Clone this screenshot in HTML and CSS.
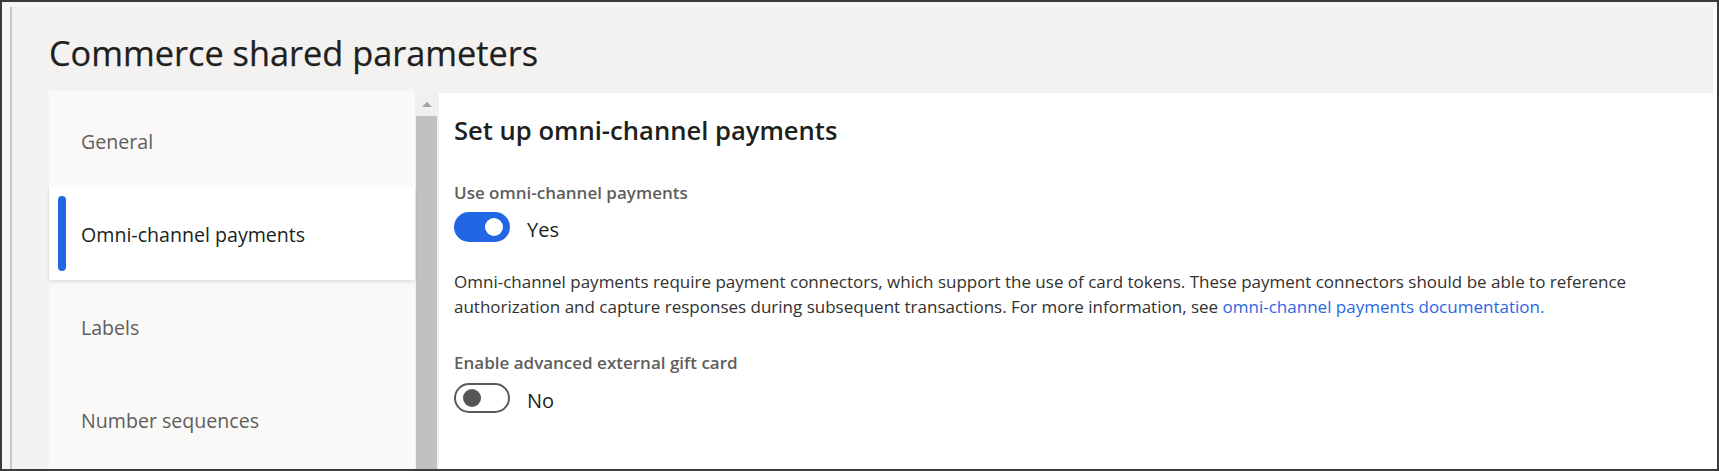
FILE: index.html
```html
<!DOCTYPE html>
<html lang="en">
<head>
<meta charset="utf-8">
<title>Commerce shared parameters</title>
<link rel="stylesheet" href="styles.css">
</head>
<body>
<div class="frame">
  <div class="app">
    <header class="page-header">
      <h1 class="page-title">Commerce shared parameters</h1>
    </header>
    <div class="workspace">
      <nav class="nav">
        <div class="nav-item">General</div>
        <div class="nav-item is-selected"><span class="nav-marker"></span>Omni-channel payments</div>
        <div class="nav-item">Labels</div>
        <div class="nav-item">Number sequences</div>
      </nav>
      <div class="scrollbar">
        <div class="scroll-arrow"><span class="arrow-up"></span></div>
        <div class="scroll-thumb"></div>
      </div>
      <main class="content">
        <h2 class="section-title">Set up omni-channel payments</h2>
        <div class="field-label first">Use omni-channel payments</div>
        <div class="toggle-row">
          <span class="toggle on"><span class="knob"></span></span>
          <span class="toggle-text">Yes</span>
        </div>
        <p class="help">Omni-channel payments require payment connectors, which support the use of card tokens. These payment connectors should be able to reference authorization and capture responses during subsequent transactions. For more information, see <a class="link" href="#">omni-channel payments documentation.</a></p>
        <div class="field-label second">Enable advanced external gift card</div>
        <div class="toggle-row second">
          <span class="toggle off"><span class="knob"></span></span>
          <span class="toggle-text">No</span>
        </div>
      </main>
    </div>
  </div>
</div>
</body>
</html>
```
FILE: styles.css
```css
* { box-sizing: border-box; }
html, body { margin: 0; padding: 0; }
body {
  font-family: "Segoe UI", "Open Sans", "Noto Sans", sans-serif;
  background: #ffffff;
  width: 1719px;
  height: 471px;
  overflow: hidden;
}
.frame {
  width: 1719px;
  height: 471px;
  border: 2px solid #3c3c3c;
  background: #f6f6f6;
  display: flex;
  padding-top: 5px;
  padding-left: 8px;
}
.app {
  flex: 1;
  display: flex;
  flex-direction: column;
  background: #f3f2f1;
  border-left: 2px solid #c8c8c8;
  border-right: 4px solid #ffffff;
  min-width: 0;
}
.page-header {
  height: 84px;
  padding-left: 37px;
}
.page-title {
  margin: 0;
  padding-top: 25px;
  font-size: 34.3px;
  line-height: 42px;
  font-weight: 400;
  color: #201f1e;
  -webkit-text-stroke: 0.25px #201f1e;
}
.workspace {
  flex: 1;
  display: flex;
  margin-left: 37px;
  min-height: 0;
}
.nav {
  width: 366px;
  background: #faf9f8;
  padding-top: 3px;
  flex-shrink: 0;
}
.nav-item {
  position: relative;
  height: 93px;
  display: flex;
  align-items: center;
  padding-left: 32px;
  padding-top: 2px;
  font-size: 19.6px;
  color: #605e5c;
}
.nav-item.is-selected {
  background: #ffffff;
  color: #201f1e;
  box-shadow: 0 1.6px 3.6px rgba(0,0,0,0.13), 0 0.3px 0.9px rgba(0,0,0,0.11);
  z-index: 1;
}
.nav-marker {
  position: absolute;
  left: 9px;
  top: 9px;
  bottom: 9px;
  width: 8px;
  border-radius: 4px;
  background: #2266e3;
}
.scrollbar {
  width: 24px;
  background: #f0f0f0;
  padding: 2px 2px 0 1px;
  display: flex;
  flex-direction: column;
  flex-shrink: 0;
}
.scroll-arrow {
  height: 23px;
  display: flex;
  align-items: center;
  justify-content: center;
}
.arrow-up {
  width: 0;
  height: 0;
  border-left: 5px solid transparent;
  border-right: 5px solid transparent;
  border-bottom: 5px solid #a3a3a3;
}
.scroll-thumb {
  flex: 1;
  background: #c1c1c1;
}
.content {
  flex: 1;
  background: #ffffff;
  margin-top: 2px;
  padding-left: 15px;
  padding-top: 22px;
  color: #201f1e;
}
.section-title {
  margin: 0;
  font-size: 25.6px;
  line-height: 32px;
  font-weight: 600;
  color: #201f1e;
}
.field-label {
  font-size: 17px;
  line-height: 20px;
  font-weight: 600;
  color: #605e5c;
}
.field-label.first { margin-top: 36px; }
.field-label.second { margin-top: 34px; }
.toggle-row {
  display: flex;
  align-items: center;
  margin-top: 9px;
  height: 30px;
}
.toggle-row.second { margin-top: 10px; }
.toggle {
  position: relative;
  width: 56px;
  height: 30px;
  border-radius: 15px;
  display: flex;
  align-items: center;
  flex-shrink: 0;
}
.toggle.on {
  background: #2266e3;
  justify-content: flex-end;
  padding-right: 7px;
}
.toggle.off {
  background: #ffffff;
  border: 2px solid #5a5a5a;
  padding-left: 7px;
}
.knob {
  width: 18px;
  height: 18px;
  border-radius: 50%;
}
.toggle.on .knob { background: #ffffff; }
.toggle.off .knob { background: #555555; }
.toggle-text {
  margin-left: 17px;
  font-size: 20px;
  line-height: 30px;
  padding-top: 6px;
  color: #201f1e;
}
.help {
  margin: 27px 0 0 0;
  font-size: 17px;
  line-height: 25px;
  color: #323130;
  max-width: 1200px;
}
.link {
  color: #2b66e6;
  text-decoration: none;
}
```
